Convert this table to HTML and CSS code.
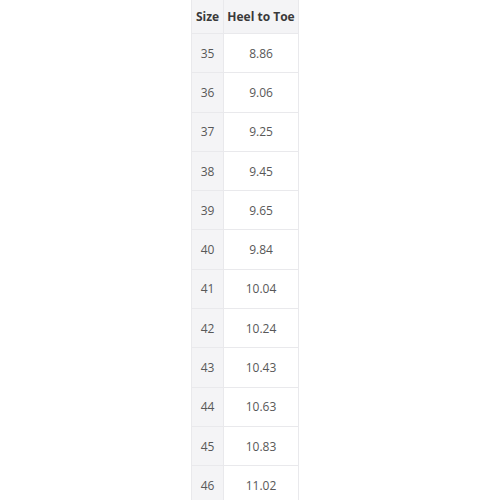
FILE: index.html
```html
<!DOCTYPE html>
<html>
<head>
<meta charset="utf-8">
<link rel="stylesheet" href="styles.css">
</head>
<body>
<table class="chart">
  <thead>
    <tr><th class="c1">Size</th><th class="c2">Heel to Toe</th></tr>
  </thead>
  <tbody>
    <tr><td class="c1">35</td><td class="c2">8.86</td></tr>
    <tr><td class="c1">36</td><td class="c2">9.06</td></tr>
    <tr><td class="c1">37</td><td class="c2">9.25</td></tr>
    <tr><td class="c1">38</td><td class="c2">9.45</td></tr>
    <tr><td class="c1">39</td><td class="c2">9.65</td></tr>
    <tr><td class="c1">40</td><td class="c2">9.84</td></tr>
    <tr><td class="c1">41</td><td class="c2">10.04</td></tr>
    <tr><td class="c1">42</td><td class="c2">10.24</td></tr>
    <tr><td class="c1">43</td><td class="c2">10.43</td></tr>
    <tr><td class="c1">44</td><td class="c2">10.63</td></tr>
    <tr><td class="c1">45</td><td class="c2">10.83</td></tr>
    <tr><td class="c1">46</td><td class="c2">11.02</td></tr>
  </tbody>
</table>
</body>
</html>
```
FILE: styles.css
```css
html, body {
  margin: 0;
  padding: 0;
  background: #ffffff;
  overflow: hidden;
}
body {
  padding-left: 191px;
  font-family: "Open Sans", "Liberation Sans", sans-serif;
  font-size: 12px;
}
.chart {
  border-collapse: collapse;
  table-layout: fixed;
  width: 106px;
}
.chart th, .chart td {
  border: 1px solid #e9e9ec;
  padding: 0;
  text-align: center;
  vertical-align: middle;
}
.chart th {
  height: 33px;
  background: #f4f4f6;
  color: #3a3a3a;
  font-weight: 700;
  border-top: none;
}
.chart td {
  height: 38.3px;
  color: #585858;
}
.c1 {
  width: 31px;
}
.chart td.c1 {
  background: #f4f4f6;
}
.c2 {
  width: 74px;
}
```
